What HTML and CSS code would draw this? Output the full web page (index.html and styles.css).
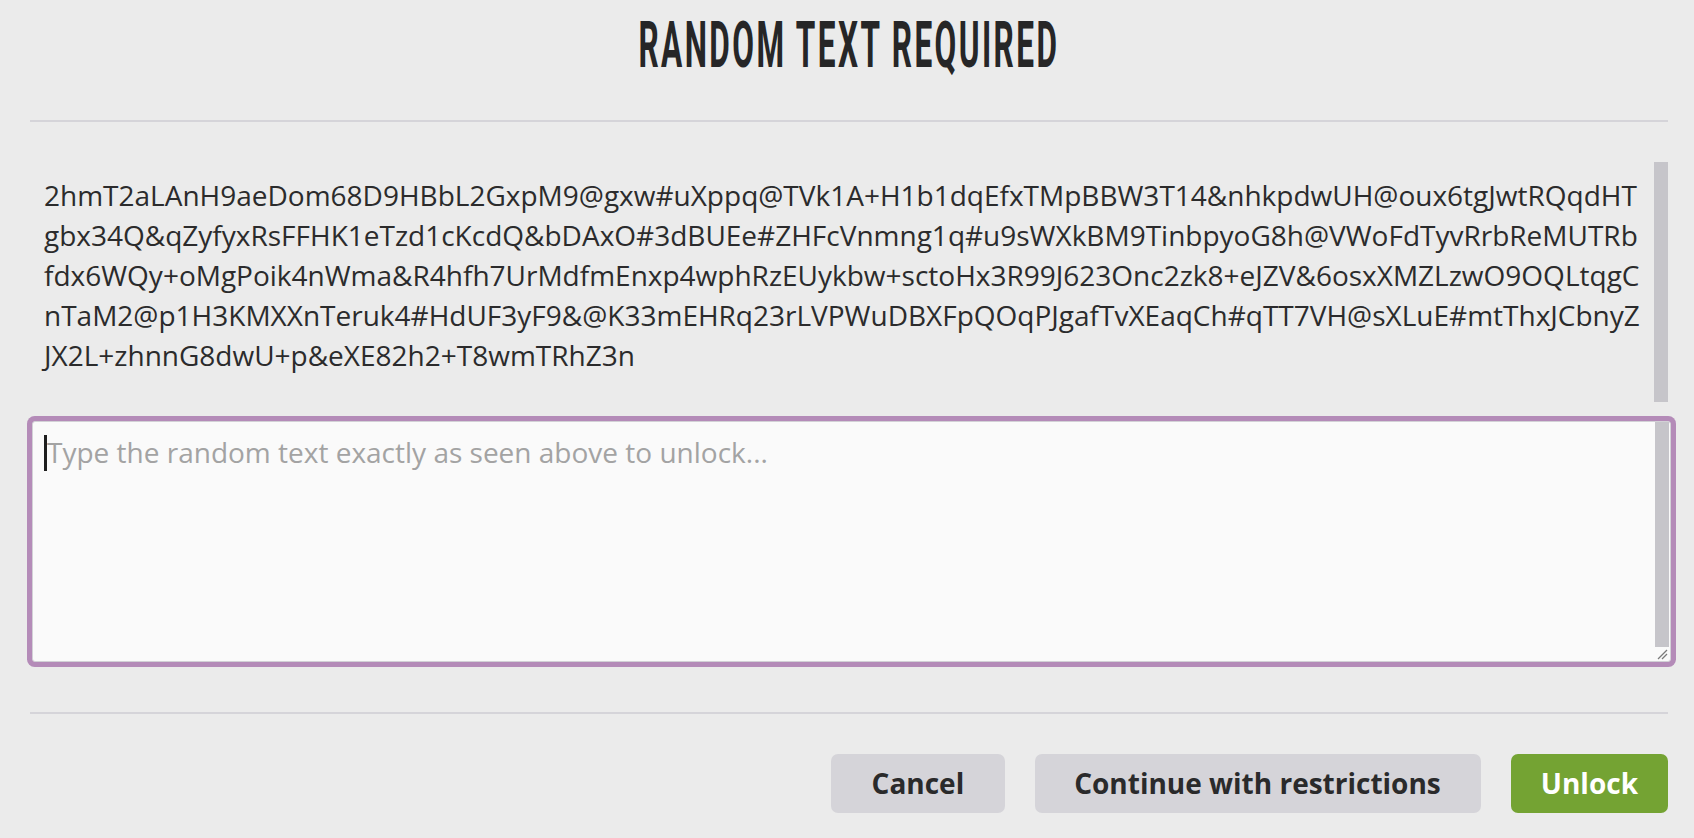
FILE: index.html
```html
<!DOCTYPE html>
<html lang="en">
<head>
<meta charset="utf-8">
<title>Random text required</title>
<link rel="stylesheet" href="styles.css">
</head>
<body>
<div class="dialog">
  <header class="dialog-header">
    <h1 class="dialog-title"><span class="dialog-title-text">RANDOM TEXT REQUIRED</span></h1>
  </header>
  <div class="random-box">
    <p class="random-text">2hmT2aLAnH9aeDom68D9HBbL2GxpM9@gxw#uXppq@TVk1A+H1b1dqEfxTMpBBW3T14&amp;nhkpdwUH@oux6tgJwtRQqdHTgbx34Q&amp;qZyfyxRsFFHK1eTzd1cKcdQ&amp;bDAxO#3dBUEe#ZHFcVnmng1q#u9sWXkBM9TinbpyoG8h@VWoFdTyvRrbReMUTRbfdx6WQy+oMgPoik4nWma&amp;R4hfh7UrMdfmEnxp4wphRzEUykbw+sctoHx3R99J623Onc2zk8+eJZV&amp;6osxXMZLzwO9OQLtqgCnTaM2@p1H3KMXXnTeruk4#HdUF3yF9&amp;@K33mEHRq23rLVPWuDBXFpQOqPJgafTvXEaqCh#qTT7VH@sXLuE#mtThxJCbnyZJX2L+zhnnG8dwU+p&amp;eXE82h2+T8wmTRhZ3n</p>
    <div class="scroll-track"></div>
  </div>
  <div class="input-box">
    <textarea class="unlock-input" placeholder="Type the random text exactly as seen above to unlock..."></textarea>
    <div class="input-scroll">
      <div class="input-scroll-track"></div>
      <div class="resize-grip">
        <svg width="14" height="14" viewBox="0 0 14 14" aria-hidden="true">
          <line x1="3" y1="12" x2="12" y2="3" stroke="#7a7a7a" stroke-width="1.2"/>
          <line x1="7" y1="12" x2="12" y2="7" stroke="#7a7a7a" stroke-width="1.2"/>
        </svg>
      </div>
    </div>
    <span class="caret"></span>
  </div>
  <footer class="dialog-footer">
    <button class="btn btn-gray">Cancel</button>
    <button class="btn btn-gray btn-wide">Continue with restrictions</button>
    <button class="btn btn-green">Unlock</button>
  </footer>
</div>
</body>
</html>
```

FILE: styles.css
```css
html, body {
  margin: 0;
  padding: 0;
  background: #ebebeb;
}

body {
  font-family: "Open Sans", "Liberation Sans", sans-serif;
  color: #2a2a2b;
  overflow: hidden;
}

.dialog {
  padding: 0 26px 0 30px;
  height: 838px;
  box-sizing: border-box;
}

.dialog-header {
  padding-top: 13px;
  padding-bottom: 42px;
  border-bottom: 2px solid #d5d4d9;
}

.dialog-title {
  margin: 0;
  display: flex;
  justify-content: center;
  font-family: "Roboto", "Liberation Sans", sans-serif;
  font-weight: 700;
  font-size: 65px;
  line-height: 65px;
  color: #262627;
}

.dialog-title-text {
  display: inline-block;
  transform: scaleX(0.485);
  letter-spacing: 5px;
  white-space: nowrap;
}

.random-box {
  margin-top: 40px;
  height: 240px;
  display: flex;
}

.random-text {
  flex: 1;
  margin: 0;
  padding: 13px 14px 0 14px;
  font-size: 28px;
  line-height: 40px;
  word-break: break-all;
  color: #2b2b2c;
}

.scroll-track {
  width: 14px;
  flex: none;
  background: #c6c5ca;
}

.input-box {
  position: relative;
  margin-top: 19px;
  margin-left: 2px;
  width: calc(100% + 1px);
  height: 241px;
  box-sizing: border-box;
  border: 1px solid #d2d1d6;
  border-radius: 3px;
  box-shadow: 0 0 0 5px #b48bb8;
  background: #fafafa;
  display: flex;
}

.unlock-input {
  flex: 1;
  border: none;
  background: transparent;
  padding: 10px 14px;
  margin: 0;
  font-family: "Open Sans", "Liberation Sans", sans-serif;
  font-size: 28px;
  line-height: 40px;
  color: #2a2a2b;
  resize: none;
  outline: none;
  caret-color: transparent;
}

.unlock-input::placeholder {
  color: #a3a3a3;
}

.input-scroll {
  width: 14px;
  flex: none;
  margin-right: 1px;
  display: flex;
  flex-direction: column;
}

.input-scroll-track {
  flex: 1;
  background: #c6c5ca;
}

.resize-grip {
  height: 14px;
  display: flex;
}

.caret {
  position: absolute;
  left: 11px;
  top: 13px;
  width: 3px;
  height: 36px;
  background: #1e1e1e;
}

.dialog-footer {
  margin-top: 50px;
  border-top: 2px solid #d5d4d9;
  padding-top: 40px;
  display: flex;
  justify-content: flex-end;
  gap: 30px;
}

.btn {
  height: 59px;
  padding: 0 41px;
  border: none;
  border-radius: 7px;
  font-family: "Open Sans", "Liberation Sans", sans-serif;
  font-weight: 700;
  font-size: 28px;
  line-height: 59px;
  cursor: pointer;
}

.btn-gray {
  background: #d5d4d9;
  color: #2a2a2b;
}

.btn-wide {
  padding: 0 40px 0 39px;
}

.btn-green {
  background: #74a333;
  color: #ffffff;
  padding: 0 30px;
}
```
